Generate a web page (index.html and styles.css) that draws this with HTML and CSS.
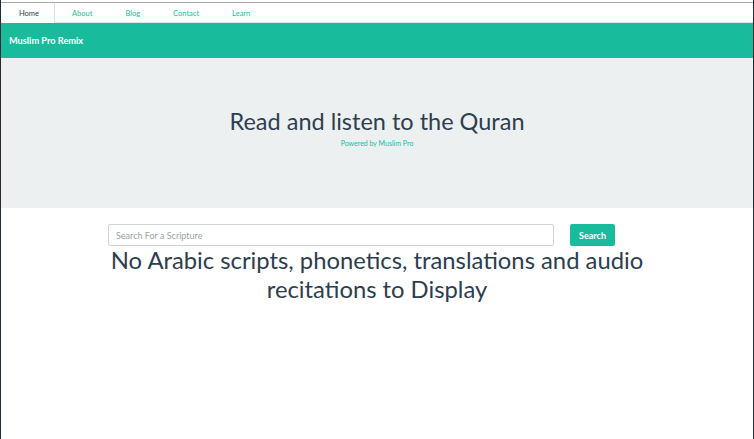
FILE: index.html
```html
<!DOCTYPE html>
<html>
<head>
<meta charset="utf-8">
<link rel="stylesheet" href="styles.css">
</head>
<body>
<div class="frame">
  <ul class="tabs">
    <li class="tab active">Home</li>
    <li class="tab">About</li>
    <li class="tab">Blog</li>
    <li class="tab">Contact</li>
    <li class="tab">Learn</li>
  </ul>
  <div class="navbar">Muslim Pro Remix</div>
  <div class="jumbo">
    <h1 class="title">Read and listen to the Quran</h1>
    <div class="powered">Powered by Muslim Pro</div>
  </div>
  <div class="container">
    <div class="search-row">
      <input class="search-input" type="text" placeholder="Search For a Scripture">
      <button class="search-btn">Search</button>
    </div>
    <h2 class="empty">No Arabic scripts, phonetics, translations and audio recitations to Display</h2>
  </div>
</div>
</body>
</html>
```
FILE: styles.css
```css
html, body {
  margin: 0;
  padding: 0;
  height: 100%;
  background: #ffffff;
}
body {
  font-family: Lato, "Open Sans", sans-serif;
  color: #2c3e50;
}
.frame {
  box-sizing: border-box;
  height: 100%;
  border-left: 1px solid #1e2d33;
  border-right: 1px solid #1e2d33;
  padding-top: 2px;
}
.tabs {
  list-style: none;
  margin: 0;
  padding: 0 0 0 1px;
  display: flex;
  gap: 1px;
  border-top: 1px solid #a8a8a8;
  border-bottom: 1px solid #e3e7e8;
  height: 19px;
}
.tab {
  padding: 0 16px;
  font-size: 7.5px;
  line-height: 21px;
  color: #18bc9c;
  height: 20px;
}
.tab.active {
  color: #2c3e50;
  background: #fff;
  border-right: 1px solid #dfe3e4;
  border-left: 1px solid #fff;
  padding: 0 15px 0 16px;
}
.navbar {
  background: #18bc9c;
  color: #fff;
  font-size: 9.2px;
  font-weight: 700;
  height: 35px;
  line-height: 35px;
  padding-left: 8px;
}
.jumbo {
  background: #ecf0f1;
  height: 150px;
  box-sizing: border-box;
  padding-top: 49px;
  text-align: center;
}
.title {
  margin: 0;
  font-weight: 400;
  font-size: 23.5px;
  line-height: 28px;
  color: #2c3e50;
}
.powered {
  font-size: 7px;
  color: #18bc9c;
  margin-top: 4px;
}
.container {
  width: 538px;
  margin: 0 auto;
  padding-top: 16px;
}
.search-row {
  display: flex;
  gap: 16px;
}
.search-input {
  box-sizing: border-box;
  width: 446px;
  height: 22px;
  border: 1px solid #cfd4d6;
  border-radius: 2px;
  padding: 0 7px;
  font-family: Lato, sans-serif;
  font-size: 9px;
  color: #2c3e50;
  outline: none;
}
.search-input::placeholder {
  color: #95a5a6;
}
.search-btn {
  width: 45px;
  height: 22px;
  background: #18bc9c;
  color: #fff;
  border: none;
  border-radius: 2px;
  font-family: Lato, sans-serif;
  font-size: 9px;
  font-weight: 700;
  padding: 0;
}
.empty {
  margin: 0;
  font-weight: 400;
  font-size: 23.8px;
  line-height: 29px;
  text-align: center;
  color: #2c3e50;
}
```
